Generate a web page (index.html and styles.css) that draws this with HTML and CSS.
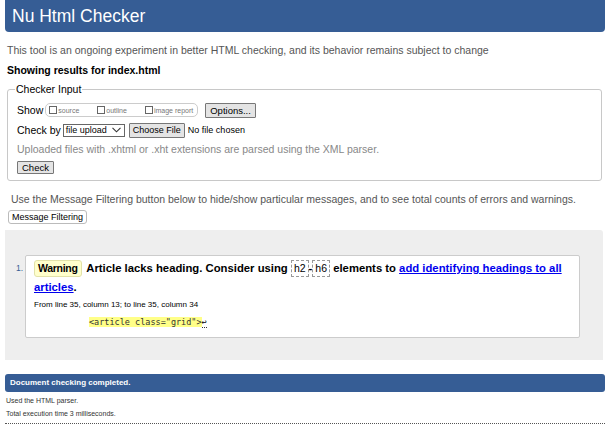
FILE: index.html
```html
<!DOCTYPE html>
<html>
<head>
<meta charset="utf-8">
<link rel="stylesheet" href="styles.css">
</head>
<body>
<h1 class="title">Nu Html Checker</h1>
<p class="intro">This tool is an ongoing experiment in better HTML checking, and its behavior remains subject to change</p>
<p class="showing">Showing results for index.html</p>
<fieldset class="input">
  <legend>Checker Input</legend>
  <div class="row first">
    <span class="lbl">Show</span>
    <span class="opts">
      <label><span class="cb"></span>source</label>
      <label><span class="cb"></span>outline</label>
      <label><span class="cb"></span>image report</label>
    </span>
    <button class="btn">Options...</button>
  </div>
  <div class="row">
    <span class="lbl">Check by</span>
    <span class="select">file upload <svg width="9" height="6" viewBox="0 0 9 6"><path d="M0.5 0.8 L4.5 4.8 L8.5 0.8" fill="none" stroke="#333" stroke-width="1.1"/></svg></span>
    <button class="btn choose">Choose File</button>
    <span class="nofile">No file chosen</span>
  </div>
  <p class="hint">Uploaded files with .xhtml or .xht extensions are parsed using the XML parser.</p>
  <button class="btn small">Check</button>
</fieldset>
<p class="filter-note">Use the Message Filtering button below to hide/show particular messages, and to see total counts of errors and warnings.</p>
<button class="btn filter">Message Filtering</button>
<div class="results">
  <ol>
    <li class="msg">
      <span class="num">1.</span>
      <p class="text"><span class="badge">Warning</span> <span class="body">Article lacks heading. Consider using <code>h2</code>-<code>h6</code> elements to <a href="#">add identifying headings to all articles</a>.</span></p>
      <p class="loc">From line 35, column 13; to line 35, column 34</p>
      <p class="extract"><code><b>&lt;article class="grid"&gt;</b><span class="lf">&#8617;</span></code></p>
    </li>
  </ol>
</div>
<p class="done">Document checking completed.</p>
<p class="meta">Used the HTML parser.</p>
<p class="meta">Total execution time 3 milliseconds.</p>
<hr class="dots">
</body>
</html>
```
FILE: styles.css
```css
* { box-sizing: border-box; }
body {
  margin: 0 6px 0 5px;
  font-family: "Liberation Sans", Arial, sans-serif;
  color: #000;
  background: #fff;
}
.title {
  margin: 0;
  background: #365d95;
  color: #fff;
  font-weight: normal;
  font-size: 17.5px;
  line-height: 32px;
  height: 32px;
  padding: 0 7px;
  border-radius: 0 0 4px 4px;
}
.intro {
  margin: 12px 0 0 2px;
  font-size: 10.5px;
  color: #555;
  line-height: 13px;
}
.showing {
  margin: 7px 0 0 2px;
  font-size: 10.5px;
  font-weight: bold;
  line-height: 13px;
}
.input {
  margin: 6px 3px 0 2px;
  border: 1px solid #c8c8c8;
  border-radius: 3px;
  padding: 0 9px 5px 9px;
}
.input legend {
  font-size: 10.5px;
  padding: 0 1px;
  margin-left: -2px;
}
.row {
  display: flex;
  align-items: center;
  font-size: 10.5px;
  height: 20px;
}
.row.first { margin-top: 5px; }
.lbl { margin-right: 2px; }
.opts {
  display: inline-flex;
  border: 1px solid #ccc;
  border-radius: 5px;
  padding: 0 4px 0 3px;
  height: 14px;
  align-items: center;
  font-size: 7px;
  color: #777;
  gap: 18px;
}
.opts label { display: inline-flex; align-items: flex-end; }
.cb {
  display: inline-block;
  width: 8px; height: 8px;
  border: 1px solid #666;
  margin-right: 1px;
}
.btn {
  font-family: "Liberation Sans", Arial, sans-serif;
  font-size: 9.5px;
  background: #e4e4e4;
  border: 1px solid #777;
  border-radius: 1px;
  padding: 0 4px;
  height: 15px;
  line-height: 13px;
  color: #000;
  margin-left: 7px;
}
.btn.choose { margin-left: 4px; font-size: 9px; padding: 0 3px; }
.select {
  display: inline-flex;
  align-items: center;
  gap: 5px;
  border: 1px solid #666;
  height: 13px;
  padding: 0 3px 0 2px;
  font-size: 9px;
}
.nofile { margin-left: 3px; font-size: 9px; }
.hint {
  margin: 3px 0 0 0;
  font-size: 10.5px;
  color: #888;
  line-height: 13px;
}
.btn.small {
  margin: 5px 0 0 0;
  padding: 0 4px;
  height: 13px;
  line-height: 11px;
}
.filter-note {
  margin: 12px 0 0 6px;
  font-size: 10.5px;
  color: #555;
  line-height: 13px;
}
.btn.filter {
  margin: 4px 0 0 3px;
  font-size: 9px;
  background: #fff;
  border: 1px solid #bbb;
  border-radius: 3px;
  padding: 0 3px;
  height: 14px;
  line-height: 12px;
}
.results {
  margin: 6px 2px 0 0;
  background: #eee;
  border-radius: 0 3px 0 0;
  padding: 25px 23px 22px 20px;
}
.results ol {
  margin: 0;
  padding: 0;
  list-style: none;
}
.msg {
  background: #fff;
  border: 1px solid #ccc;
  border-radius: 2px;
  padding: 3px 7px 9px 8px;
  position: relative;
}
.num {
  position: absolute;
  left: -10px;
  top: 7px;
  font-size: 8.5px;
  color: #365d95;
}
.text {
  margin: 0;
  font-size: 11.3px;
  line-height: 19px;
  font-weight: bold;
}
.badge {
  display: inline-block;
  background: #ffc;
  border: 1px solid #e2e2a8;
  border-radius: 3px;
  padding: 0 3px;
  font-size: 10.5px;
  letter-spacing: -0.3px;
  line-height: 15px;
  margin-right: 2px;
}
.text code {
  display: inline-block;
  font-family: "Liberation Sans", Arial, sans-serif;
  font-weight: normal;
  border: 1px dashed #999;
  padding: 0 2px;
  line-height: 15px;
  font-size: 10.5px;
}
.text a { color: #00e; }
.loc {
  margin: 3px 0 0 0;
  font-size: 8px;
  line-height: 10px;
}
.extract {
  margin: 7px 0 0 55px;
  font-size: 8.5px;
  line-height: 11px;
}
.extract code {
  font-family: "DejaVu Sans Mono", monospace;
  font-size: 8.5px;
}
.extract b {
  font-weight: normal;
  background: #ff8;
  color: #333;
}
.lf { border-bottom: 1px dotted #333; }
.done {
  margin: 14px 0 0 0;
  background: #365d95;
  color: #fff;
  font-weight: bold;
  font-size: 8px;
  line-height: 18px;
  height: 18px;
  padding: 0 5px;
  border-radius: 3px;
}
.meta {
  margin: 4px 0 0 1px;
  font-size: 7px;
  color: #333;
  line-height: 9px;
}
.dots {
  margin: 5px 0 0 0;
  border: 0;
  border-top: 1px dotted #555;
}
```
